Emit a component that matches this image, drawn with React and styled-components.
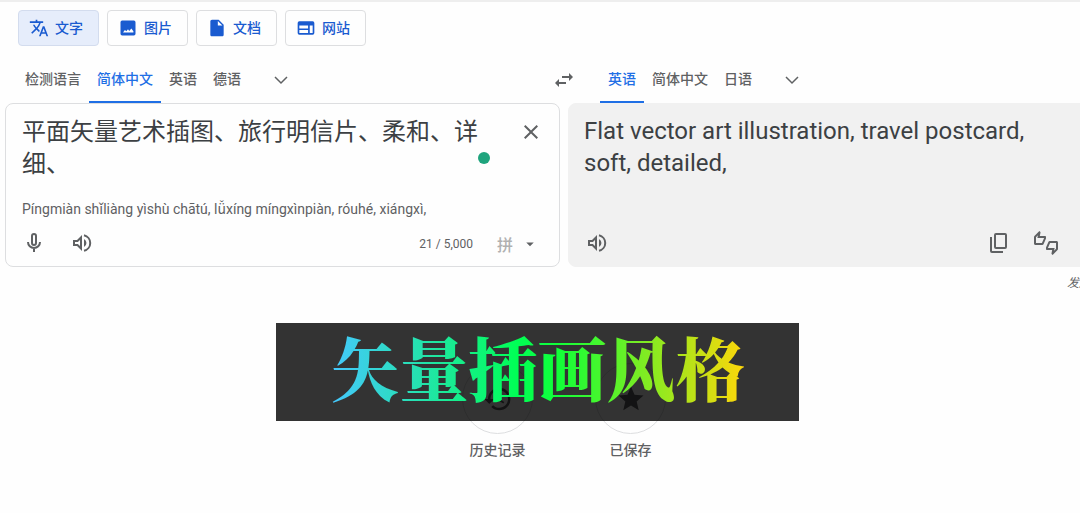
// src/App.jsx
import React, { useState } from "react";
import styled, { createGlobalStyle } from "styled-components";
import {
  MdArrowDropDown,
  MdClose,
  MdHistory,
  MdInsertDriveFile,
  MdOutlineThumbsUpDown,
  MdShare,
  MdStar,
  MdSwapHoriz,
  MdTranslate,
} from "react-icons/md";

const COLORS = {
  page: "#fefefe",
  line: "#dddee0",
  blue: "#1a5bd0",
  blueBright: "#1f6fe5",
  blueSoft: "#e6edfb",
  text: "#3c4043",
  textLight: "#5f6163",
  muted: "#b0b0b0",
  output: "#f1f1f1",
  green: "#1fa47d",
};

const GlobalStyle = createGlobalStyle`
  * {
    box-sizing: border-box;
  }

  body {
    margin: 0;
    background: ${COLORS.page};
    color: ${COLORS.text};
    font-family: Roboto, "Noto Sans CJK SC", sans-serif;
    overflow: hidden;
  }

  button,
  textarea {
    font-family: inherit;
  }
`;

/* ============= ICONS ============= */

const ImageIcon = () => (
  <svg width="20" height="20" viewBox="0 0 24 24" fill="currentColor" aria-hidden="true">
    <path
      fillRule="evenodd"
      d="M5 3h14a2 2 0 0 1 2 2v14a2 2 0 0 1-2 2H5a2 2 0 0 1-2-2V5a2 2 0 0 1 2-2zm1 14.500h12.500v-1.500l-2.500-3.500-2.500 3-1.500-2-2 2.500-1.700-1.700z"
    />
  </svg>
);

const WebIcon = () => (
  <svg width="20" height="20" viewBox="0 0 24 24" fill="currentColor" aria-hidden="true">
    <path
      fillRule="evenodd"
      d="M4 4h16a2 2 0 0 1 2 2v12a2 2 0 0 1-2 2H4a2 2 0 0 1-2-2V6a2 2 0 0 1 2-2zm0 5v3.500h10.500V9zm0 5.500V18h10.500v-3.500zM16.500 9v9H20V9z"
    />
  </svg>
);

const MicIcon = () => (
  <svg width="24" height="24" viewBox="0 0 24 24" fill="none" stroke="currentColor" strokeWidth="2" aria-hidden="true">
    <rect x="10" y="3" width="4" height="11" rx="2" />
    <path d="M6 11a6 6 0 0 0 12 0M12 17v4" />
  </svg>
);

const SpeakerIcon = () => (
  <svg width="24" height="24" viewBox="0 0 24 24" fill="none" stroke="currentColor" strokeWidth="2" aria-hidden="true">
    <path d="M4 10h3.500L11 6.500v11L7.500 14H4z" />
    <path d="M14 4.200a8 8 0 0 1 0 15.600" />
    <path d="M14 8v8a4.500 4.500 0 0 0 0-8z" fill="currentColor" stroke="none" />
  </svg>
);

const CopyIcon = () => (
  <svg width="24" height="24" viewBox="0 0 24 24" fill="none" stroke="currentColor" strokeWidth="2" aria-hidden="true">
    <rect x="9" y="3" width="11" height="14" rx="1" />
    <path d="M5 6v14a1 1 0 0 0 1 1h11" />
  </svg>
);

const Chevron = () => (
  <svg width="16" height="16" viewBox="0 0 16 16" fill="none" aria-hidden="true">
    <path d="M2 5l6 6 6-6" stroke="currentColor" strokeWidth="1.500" />
  </svg>
);

/* ============= PAGE ============= */

const MODES = [
  { label: "文字", icon: <MdTranslate size={20} /> },
  { label: "图片", icon: <ImageIcon /> },
  { label: "文档", icon: <MdInsertDriveFile size={20} /> },
  { label: "网站", icon: <WebIcon /> },
];

const SOURCE_LANGS = ["检测语言", "简体中文", "英语", "德语"];
const TARGET_LANGS = ["英语", "简体中文", "日语"];

const LanguageTabs = ({ langs, initial }) => {
  const [active, setActive] = useState(initial);

  return (
    <>
      {langs.map((lang) => (
        <Tab key={lang} $active={lang === active} onClick={() => setActive(lang)}>
          {lang}
        </Tab>
      ))}
      <MoreButton aria-label="更多语言">
        <Chevron />
      </MoreButton>
    </>
  );
};

const App = () => {
  const [mode, setMode] = useState("文字");
  const [source, setSource] = useState(
    "平面矢量艺术插图、旅行明信片、柔和、详细、"
  );

  return (
    <Page>
      <GlobalStyle />

      <ModeBar>
        {MODES.map(({ label, icon }) => (
          <ModeButton key={label} $active={label === mode} onClick={() => setMode(label)}>
            {icon}
            <ModeLabel>{label}</ModeLabel>
          </ModeButton>
        ))}
      </ModeBar>

      <Workspace>
        <LanguageBar>
          <TabList>
            <LanguageTabs langs={SOURCE_LANGS} initial="简体中文" />
          </TabList>
          <SwapButton aria-label="切换语言">
            <MdSwapHoriz size={24} />
          </SwapButton>
          <TargetTabList>
            <LanguageTabs langs={TARGET_LANGS} initial="英语" />
          </TargetTabList>
        </LanguageBar>

        <Panels>
          <SourcePanel>
            <SourceRow>
              <SourceText
                aria-label="原文"
                rows={2}
                spellCheck={false}
                value={source}
                onChange={(e) => setSource(e.target.value)}
              />
              <ClearButton aria-label="清除" onClick={() => setSource("")}>
                <MdClose size={24} />
              </ClearButton>
            </SourceRow>
            <Pinyin>
              Píngmiàn shǐliàng yìshù chātú, lǚxíng míngxìnpiàn, róuhé, xiángxì,
            </Pinyin>
            <Actions>
              <IconButton aria-label="语音输入">
                <MicIcon />
              </IconButton>
              <IconButton aria-label="朗读原文">
                <SpeakerIcon />
              </IconButton>
              <Counter>21 / 5,000</Counter>
              <InputTool aria-label="输入法">
                拼
                <MdArrowDropDown size={18} color={COLORS.textLight} />
              </InputTool>
            </Actions>
            <HelperDot />
          </SourcePanel>

          <TargetPanel>
            <Translation>
              Flat vector art illustration, travel postcard, soft, detailed,
            </Translation>
            <Actions>
              <IconButton aria-label="朗读译文">
                <SpeakerIcon />
              </IconButton>
              <Spacer />
              <IconButton aria-label="复制">
                <CopyIcon />
              </IconButton>
              <IconButton aria-label="评价">
                <MdOutlineThumbsUpDown size={24} />
              </IconButton>
              <IconButton aria-label="分享">
                <MdShare size={22} />
              </IconButton>
            </Actions>
          </TargetPanel>
        </Panels>

        <Feedback href="#feedback">发送反馈</Feedback>

        <Shortcuts>
          <Shortcut>
            <Circle>
              <MdHistory size={30} />
            </Circle>
            历史记录
          </Shortcut>
          <Shortcut>
            <Circle>
              <MdStar size={30} />
            </Circle>
            已保存
          </Shortcut>
        </Shortcuts>
      </Workspace>

      <Caption>
        <CaptionText>矢量插画风格</CaptionText>
      </Caption>
    </Page>
  );
};

export default App;

/* ============= STYLES ============= */

const Page = styled.main`
  position: relative;
  min-height: 100vh;
  border-top: 2px solid #eeeeee;
  overflow: hidden;
`;

const PlainButton = styled.button`
  display: flex;
  align-items: center;
  justify-content: center;
  padding: 0;
  border: 0;
  background: none;
  color: ${COLORS.textLight};
  cursor: pointer;
`;

/* Top buttons */
const ModeBar = styled.nav`
  display: flex;
  gap: 8px;
  padding: 8px 18px 10px;
`;

const ModeButton = styled(PlainButton)`
  gap: 6px;
  height: 36px;
  padding: 0 15px 0 10px;
  border: 1px solid ${({ $active }) => ($active ? "#d3dcee" : COLORS.line)};
  border-radius: 4px;
  background: ${({ $active }) => ($active ? COLORS.blueSoft : "transparent")};
  color: ${COLORS.blue};
  font-size: 14px;
  font-weight: 500;
`;

const ModeLabel = styled.span`
  padding-bottom: 2px;
`;

/* The workspace is wider than the window, its right edge is cut off */
const Workspace = styled.div`
  margin: 0 -43px 0 5px;
`;

const LanguageBar = styled.div`
  display: grid;
  grid-template-columns: 1fr 28px 1fr;
  height: 47px;
`;

const TabList = styled.div`
  display: flex;
  padding-left: 12px;
`;

const TargetTabList = styled(TabList)`
  padding-left: 22px;
`;

const Tab = styled(PlainButton)`
  padding: 0 8px 2px;
  border-bottom: 2px solid
    ${({ $active }) => ($active ? COLORS.blueBright : "transparent")};
  color: ${({ $active }) => ($active ? COLORS.blueBright : COLORS.textLight)};
  font-size: 14px;
  font-weight: 500;
`;

const MoreButton = styled(PlainButton)`
  width: 48px;
  margin-left: 8px;
`;

const SwapButton = styled(PlainButton)`
  width: 28px;
`;

/* Panels */
const Panels = styled.div`
  display: grid;
  grid-template-columns: 1fr 1fr;
  gap: 8px;
`;

const Panel = styled.section`
  display: flex;
  flex-direction: column;
  min-height: 164px;
  border-radius: 8px;
`;

const SourcePanel = styled(Panel)`
  position: relative;
  border: 1px solid ${COLORS.line};
`;

const TargetPanel = styled(Panel)`
  border: 1px solid ${COLORS.output};
  background: ${COLORS.output};
`;

const SourceRow = styled.div`
  display: flex;
  align-items: flex-start;
  gap: 12px;
  padding: 12px 8px 0 16px;
`;

const SourceText = styled.textarea`
  flex: 1;
  min-width: 0;
  padding: 0;
  border: 0;
  outline: 0;
  resize: none;
  overflow: hidden;
  background: transparent;
  color: ${COLORS.text};
  font-size: 24px;
  line-height: 32px;
`;

const ClearButton = styled(PlainButton)`
  width: 40px;
  height: 32px;
`;

const Pinyin = styled.p`
  margin: 19px 16px 0;
  color: ${COLORS.textLight};
  font-size: 14px;
  line-height: 20px;
`;

const Translation = styled.p`
  margin: 0;
  padding: 11px 80px 0 15px;
  color: ${COLORS.text};
  font-size: 24px;
  line-height: 32px;
`;

const Actions = styled.div`
  display: flex;
  align-items: center;
  height: 46px;
  margin-top: auto;
  padding: 0 4px;
`;

const IconButton = styled(PlainButton)`
  width: 48px;
  height: 46px;
`;

const Spacer = styled.div`
  flex: 1;
`;

const Counter = styled.span`
  margin-left: auto;
  padding-top: 2px;
  color: ${COLORS.textLight};
  font-size: 12px;
`;

const InputTool = styled(PlainButton)`
  gap: 8px;
  margin: 0 16px 0 24px;
  padding-top: 2px;
  color: ${COLORS.muted};
  font-size: 16px;
  font-weight: 500;
`;

const HelperDot = styled.span`
  position: absolute;
  top: 48px;
  right: 69px;
  width: 12px;
  height: 12px;
  border-radius: 50%;
  background: ${COLORS.green};
`;

const Feedback = styled.a`
  display: block;
  padding: 8px 8px 0;
  color: ${COLORS.textLight};
  font-size: 12px;
  font-style: italic;
  line-height: 16px;
  text-align: right;
  text-decoration: none;
`;

/* History and saved */
const Shortcuts = styled.div`
  display: flex;
  justify-content: center;
  gap: 62px;
  padding-top: 72px;
`;

const Shortcut = styled(PlainButton)`
  flex-direction: column;
  gap: 6px;
  width: 71px;
  font-size: 14px;
  font-weight: 500;
  line-height: 20px;
`;

const Circle = styled.span`
  display: flex;
  align-items: center;
  justify-content: center;
  width: 71px;
  height: 71px;
  border: 1px solid ${COLORS.line};
  border-radius: 50%;
`;

/* Caption laid over the page */
const Caption = styled.div`
  position: absolute;
  top: 321px;
  left: calc(50% - 264px);
  display: flex;
  justify-content: center;
  width: 523px;
  height: 98px;
  background: rgba(0, 0, 0, 0.8);
`;

const CaptionText = styled.strong`
  font-family: "Noto Serif CJK SC", "Source Han Serif SC", "Noto Sans CJK SC", serif;
  font-size: 69px;
  font-weight: 900;
  line-height: 88px;
  background: linear-gradient(90deg, #45c8ff, #00ff55 45%, #12ff38 55%, #ffd60a);
  background-clip: text;
  -webkit-background-clip: text;
  color: transparent;
`;
